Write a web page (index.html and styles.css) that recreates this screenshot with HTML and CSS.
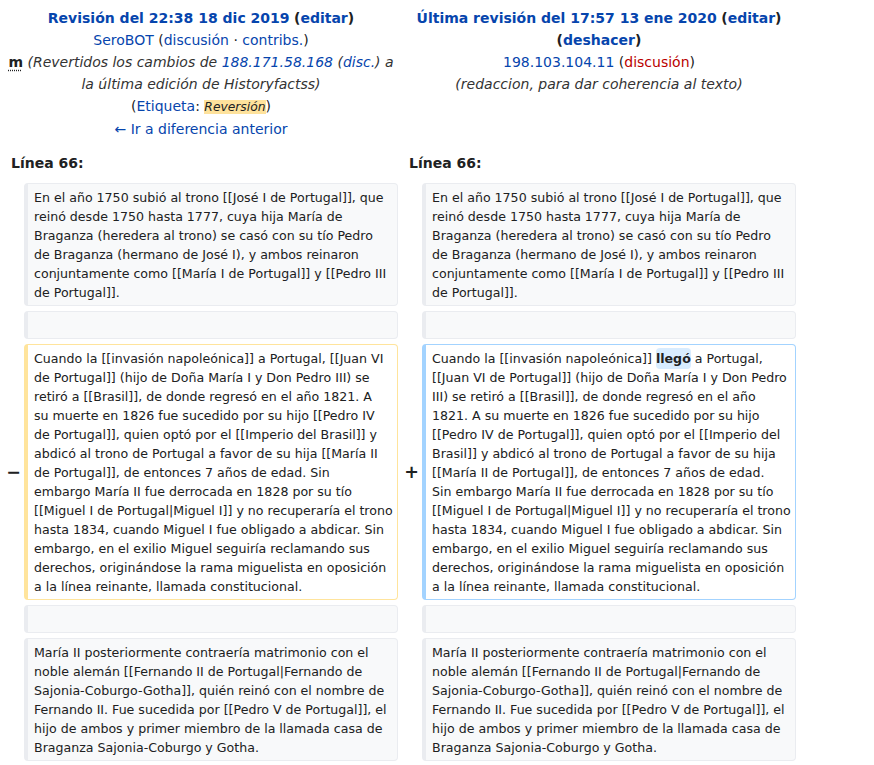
FILE: index.html
```html
<!DOCTYPE html>
<html lang="es">
<head>
<meta charset="utf-8">
<title>Diferencia entre revisiones</title>
<link rel="stylesheet" href="styles.css">
</head>
<body>
<div class="diff">
  <div class="head">
    <div><a class="title" href="#">Revisión del 22:38 18 dic 2019</a> <b>(<a href="#">editar</a>)</b></div>
    <div><a href="#">SeroBOT</a> (<a href="#">discusión</a> · <a href="#">contribs.</a>)</div>
    <div><abbr class="minor">m</abbr> <span class="comment">(Revertidos los cambios de <a href="#">188.171.58.168</a> (<a href="#">disc.</a>) a la última edición de Historyfactss)</span></div>
    <div>(<a href="#">Etiqueta</a>: <span class="tag">Reversión</span>)</div>
    <div><a href="#">← Ir a diferencia anterior</a></div>
  </div>
  <div class="head">
    <div><a class="title" href="#">Última revisión del 17:57 13 ene 2020</a> <b>(<a href="#">editar</a>)</b> <b>(<a href="#">deshacer</a>)</b></div>
    <div><a href="#">198.103.104.11</a> (<a class="new" href="#">discusión</a>)</div>
    <div><span class="comment">(redaccion, para dar coherencia al texto)</span></div>
  </div>

  <div class="lineno">Línea 66:</div>
  <div class="lineno">Línea 66:</div>

  <div class="marker"></div>
  <div class="cell ctx">En el año 1750 subió al trono [[José I de Portugal]], que<br>reinó desde 1750 hasta 1777, cuya hija María de<br>Braganza (heredera al trono) se casó con su tío Pedro<br>de Braganza (hermano de José I), y ambos reinaron<br>conjuntamente como [[María I de Portugal]] y [[Pedro III<br>de Portugal]].</div>
  <div class="marker"></div>
  <div class="cell ctx">En el año 1750 subió al trono [[José I de Portugal]], que<br>reinó desde 1750 hasta 1777, cuya hija María de<br>Braganza (heredera al trono) se casó con su tío Pedro<br>de Braganza (hermano de José I), y ambos reinaron<br>conjuntamente como [[María I de Portugal]] y [[Pedro III<br>de Portugal]].</div>

  <div class="marker"></div>
  <div class="cell ctx"><br></div>
  <div class="marker"></div>
  <div class="cell ctx"><br></div>

  <div class="marker">−</div>
  <div class="cell del">Cuando la [[invasión napoleónica]] a Portugal, [[Juan VI<br>de Portugal]] (hijo de Doña María I y Don Pedro III) se<br>retiró a [[Brasil]], de donde regresó en el año 1821. A<br>su muerte en 1826 fue sucedido por su hijo [[Pedro IV<br>de Portugal]], quien optó por el [[Imperio del Brasil]] y<br>abdicó al trono de Portugal a favor de su hija [[María II<br>de Portugal]], de entonces 7 años de edad. Sin<br>embargo María II fue derrocada en 1828 por su tío<br>[[Miguel I de Portugal|Miguel I]] y no recuperaría el trono<br>hasta 1834, cuando Miguel I fue obligado a abdicar. Sin<br>embargo, en el exilio Miguel seguiría reclamando sus<br>derechos, originándose la rama miguelista en oposición<br>a la línea reinante, llamada constitucional.</div>
  <div class="marker">+</div>
  <div class="cell add">Cuando la [[invasión napoleónica]] <ins class="change">llegó</ins> a Portugal,<br>[[Juan VI de Portugal]] (hijo de Doña María I y Don Pedro<br>III) se retiró a [[Brasil]], de donde regresó en el año<br>1821. A su muerte en 1826 fue sucedido por su hijo<br>[[Pedro IV de Portugal]], quien optó por el [[Imperio del<br>Brasil]] y abdicó al trono de Portugal a favor de su hija<br>[[María II de Portugal]], de entonces 7 años de edad.<br>Sin embargo María II fue derrocada en 1828 por su tío<br>[[Miguel I de Portugal|Miguel I]] y no recuperaría el trono<br>hasta 1834, cuando Miguel I fue obligado a abdicar. Sin<br>embargo, en el exilio Miguel seguiría reclamando sus<br>derechos, originándose la rama miguelista en oposición<br>a la línea reinante, llamada constitucional.</div>

  <div class="marker"></div>
  <div class="cell ctx"><br></div>
  <div class="marker"></div>
  <div class="cell ctx"><br></div>

  <div class="marker"></div>
  <div class="cell ctx">María II posteriormente contraería matrimonio con el<br>noble alemán [[Fernando II de Portugal|Fernando de<br>Sajonia-Coburgo-Gotha]], quién reinó con el nombre de<br>Fernando II. Fue sucedida por [[Pedro V de Portugal]], el<br>hijo de ambos y primer miembro de la llamada casa de<br>Braganza Sajonia-Coburgo y Gotha.</div>
  <div class="marker"></div>
  <div class="cell ctx">María II posteriormente contraería matrimonio con el<br>noble alemán [[Fernando II de Portugal|Fernando de<br>Sajonia-Coburgo-Gotha]], quién reinó con el nombre de<br>Fernando II. Fue sucedida por [[Pedro V de Portugal]], el<br>hijo de ambos y primer miembro de la llamada casa de<br>Braganza Sajonia-Coburgo y Gotha.</div>
</div>
</body>
</html>
```

FILE: styles.css
```css
html, body {
  margin: 0;
  padding: 0;
  background: #ffffff;
}

body {
  font-family: "DejaVu Sans", sans-serif;
  color: #202122;
  font-size: 14px;
}

a {
  color: #0645ad;
  text-decoration: none;
}

a.new {
  color: #ba0000;
}

.diff {
  display: grid;
  grid-template-columns: 16px 374px 16px 374px;
  column-gap: 4px;
  row-gap: 5px;
  padding: 7px 4px 0 4px;
  align-items: stretch;
}

.head {
  grid-column: span 2;
  text-align: center;
  line-height: 22px;
  padding-bottom: 7px;
}

.head .title {
  font-weight: bold;
}

.head b {
  font-weight: bold;
}

.minor {
  font-weight: bold;
  text-decoration: underline dotted;
  text-underline-offset: 3px;
}

.comment {
  font-style: italic;
  color: #333333;
}

.tag {
  font-size: 12.3px;
  font-style: italic;
  background: #fee29c;
  color: #202122;
}

.lineno {
  grid-column: span 2;
  font-weight: bold;
  line-height: 22px;
  padding: 0 0 4px 7px;
}

.marker {
  align-self: center;
  text-align: right;
  font-weight: bold;
  font-size: 17.5px;
  line-height: 21px;
  margin-right: -1px;
}

.cell {
  font-size: 12.6px;
  line-height: 19px;
  padding: 3.5px 6px;
  border: 1px solid #eaecf0;
  border-left-width: 4px;
  border-radius: 4px;
  white-space: nowrap;
}

.ctx {
  background: #f8f9fa;
}

.del {
  background: #ffffff;
  border-color: #ffe49c;
}

.add {
  background: #ffffff;
  border-color: #a3d3ff;
}

.change {
  text-decoration: none;
  font-weight: bold;
  background: #d8ecff;
  border-radius: 4px;
  padding: 3px 0;
}
```
